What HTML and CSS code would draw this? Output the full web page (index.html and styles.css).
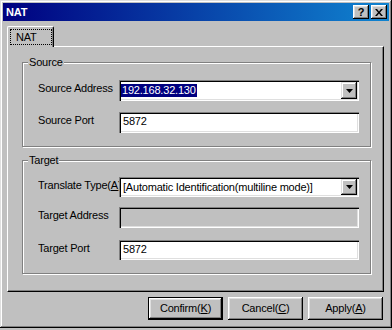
FILE: index.html
```html
<!DOCTYPE html>
<html lang="en">
<head>
    <meta charset="UTF-8">
    <title>NAT</title>
    <link rel="stylesheet" href="styles.css">
</head>
<body>
    <div class="window">
        <div class="titlebar">
            <span class="title">NAT</span>
            <div class="title-buttons">
                <div class="tbtn help">?</div>
                <div class="tbtn">
                    <svg width="8" height="7" viewBox="0 0 8 7"><path d="M0 0h2l2 2.5 2-2.5h2l-3 3.5 3 3.5h-2l-2-2.5-2 2.5h-2l3-3.5z" fill="#000"/></svg>
                </div>
            </div>
        </div>
        <div class="dialog">
            <div class="tabs">
                <div class="tab"><span class="focus">NAT</span></div>
            </div>
            <div class="panel">
                <div class="group source">
                    <span class="legend">Source</span>
                    <div class="row">
                        <label>Source Address</label>
                        <div class="combo">
                            <div class="value"><span class="selected">192.168.32.130</span></div>
                            <div class="drop"><svg width="7" height="4" viewBox="0 0 7 4"><path d="M0 0h7L3.5 4z" fill="#000"/></svg></div>
                        </div>
                    </div>
                    <div class="row">
                        <label>Source Port</label>
                        <div class="field">5872</div>
                    </div>
                </div>
                <div class="group target">
                    <span class="legend">Target</span>
                    <div class="row short">
                        <label>Translate Type(<u>A</u>)</label>
                        <div class="combo">
                            <div class="value">[Automatic Identification(multiline mode)]</div>
                            <div class="drop"><svg width="7" height="4" viewBox="0 0 7 4"><path d="M0 0h7L3.5 4z" fill="#000"/></svg></div>
                        </div>
                    </div>
                    <div class="row">
                        <label>Target Address</label>
                        <div class="field disabled"></div>
                    </div>
                    <div class="row short port">
                        <label>Target Port</label>
                        <div class="field">5872</div>
                    </div>
                </div>
            </div>
            <div class="actions">
                <div class="btn default">Confirm(<u>K</u>)</div>
                <div class="btn">Cancel(<u>C</u>)</div>
                <div class="btn">Apply(<u>A</u>)</div>
            </div>
        </div>
    </div>
</body>
</html>
```

FILE: styles.css
```css
* {
    box-sizing: border-box;
}
body {
    margin: 0;
    background: #c0c0c0;
    font-family: "Liberation Sans", Arial, sans-serif;
    font-size: 11px;
    letter-spacing: -0.2px;
    color: #000;
}
.window {
    width: 392px;
    height: 328px;
    padding: 3px;
    background: #c0c0c0;
    box-shadow: inset -1px -1px #000, inset 1px 1px #dfdfdf, inset -2px -2px #808080, inset 2px 2px #fff;
    display: flex;
    flex-direction: column;
}
.titlebar {
    flex: none;
    height: 18px;
    display: flex;
    align-items: center;
    justify-content: space-between;
    padding: 0 2px 0 3px;
    background: linear-gradient(to right, #000080, #1084d0);
    color: #fff;
    font-weight: bold;
}
.title-buttons {
    display: flex;
    gap: 2px;
}
.tbtn {
    width: 16px;
    height: 14px;
    background: #c0c0c0;
    box-shadow: inset -1px -1px #000, inset 1px 1px #fff, inset -2px -2px #808080, inset 2px 2px #dfdfdf;
    display: flex;
    align-items: center;
    justify-content: center;
    color: #000;
}
.tbtn.help {
    font-size: 11px;
    line-height: 14px;
    padding-bottom: 1px;
}
.dialog {
    flex: 1;
    display: flex;
    flex-direction: column;
    padding: 5px 5px 0 4px;
}
.tabs {
    display: flex;
    height: 20px;
}
.tab {
    position: relative;
    width: 47px;
    height: 21px;
    margin-bottom: -1px;
    background: #c0c0c0;
    border-top: 1px solid #fff;
    border-left: 1px solid #fff;
    border-right: 1px solid #000;
    border-radius: 2px 2px 0 0;
    box-shadow: inset -1px 0 #808080;
    padding: 2px 0 0 2px;
}
.focus {
    display: block;
    width: 42px;
    height: 16px;
    border: 1px dotted #000;
    line-height: 14px;
    padding-left: 5px;
}
.panel {
    height: 246px;
    border-top: 1px solid #fff;
    border-left: 1px solid #fff;
    border-right: 1px solid #000;
    border-bottom: 1px solid #000;
    box-shadow: inset -1px -1px #808080;
    padding: 15px 0 0 14px;
    display: flex;
    flex-direction: column;
    gap: 13px;
}
.group {
    position: relative;
    width: 349px;
    border: 1px solid #808080;
    box-shadow: inset 1px 1px #fff, 1px 1px #fff;
    padding: 17px 0 13px 15px;
    display: flex;
    flex-direction: column;
    gap: 11px;
}
.group.target {
    padding-top: 16px;
    gap: 10px;
}
.legend {
    position: absolute;
    top: -7px;
    left: 5px;
    padding: 0 1px;
    line-height: 13px;
    background: #c0c0c0;
}
.row {
    display: flex;
    height: 21px;
}
.row.short {
    height: 20px;
}
.row.port {
    margin-top: 2px;
}
.row label {
    width: 81px;
    padding-top: 2px;
    line-height: 13px;
    white-space: nowrap;
    overflow: hidden;
}
.field,
.combo {
    width: 240px;
    height: 100%;
    background: #fff;
    box-shadow: inset 1px 1px #808080, inset 2px 2px #000, inset -1px -1px #fff, inset -2px -2px #dfdfdf;
}
.field {
    padding: 1px 2px 0 4px;
    line-height: 17px;
}
.field.disabled {
    background: #c0c0c0;
}
.combo {
    display: flex;
    padding: 2px;
}
.combo .value {
    flex: 1;
    padding-left: 2px;
    line-height: 16px;
    white-space: nowrap;
    overflow: hidden;
}
.selected {
    display: inline-block;
    margin: 1px 0 0 -2px;
    padding: 0 1px;
    line-height: 13px;
    background: #000080;
    color: #fff;
}
.drop {
    width: 16px;
    height: 100%;
    background: #c0c0c0;
    box-shadow: inset -1px -1px #000, inset 1px 1px #dfdfdf, inset -2px -2px #808080, inset 2px 2px #fff;
    display: flex;
    align-items: center;
    justify-content: center;
}
.actions {
    display: flex;
    justify-content: flex-end;
    gap: 5px;
    margin-top: 5px;
    padding-right: 1px;
}
.btn {
    width: 75px;
    height: 23px;
    line-height: 23px;
    text-align: center;
    background: #c0c0c0;
    box-shadow: inset -1px -1px #000, inset 1px 1px #fff, inset -2px -2px #808080, inset 2px 2px #dfdfdf;
}
.btn.default {
    box-shadow: inset 0 0 0 1px #000, inset -2px -2px #000, inset 2px 2px #fff, inset -3px -3px #808080, inset 3px 3px #dfdfdf;
}
```
